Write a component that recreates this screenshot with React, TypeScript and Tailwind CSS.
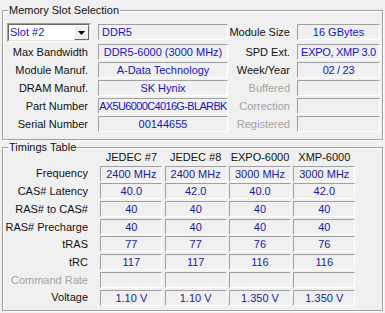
import type { ReactNode } from "react"

const box =
  "h-[16px] flex items-center border border-t-[#a0a0a0] border-l-[#a0a0a0] border-b-white border-r-white bg-[#f0f0f0] leading-[14px] whitespace-nowrap"

function Group({ title, className, children }: { title: string; className: string; children: ReactNode }) {
  return (
    <div
      className={
        "relative mx-[2px] border border-[#a0a0a0] shadow-[inset_1px_1px_0_#ffffff,1px_1px_0_#ffffff] " + className
      }
    >
      <span className="absolute left-[5px] top-[-8px] bg-[#f0f0f0] px-px leading-[14px] text-[#111]">
        {title}
      </span>
      {children}
    </div>
  )
}

function Label({ text, off, pr }: { text: string; off?: boolean; pr: string }) {
  return (
    <div className={`flex h-[16px] items-center justify-end whitespace-nowrap ${pr} ${off ? "text-[#a3a3a3]" : "text-[#111]"}`}>
      {text}
    </div>
  )
}

function Value({ text, left, dark, tight }: { text?: string; left?: boolean; dark?: boolean; tight?: boolean }) {
  return (
    <div
      className={`${box} ${left ? "justify-start pl-[3px]" : "justify-center"} ${dark ? "text-[#1a1a9c]" : "text-[#1414c4]"} ${tight ? "tracking-[-0.3px]" : ""}`}
    >
      {text}
    </div>
  )
}

function SlotSelect() {
  return (
    <div className="-mt-[1px] flex h-[19px] w-[84px] border border-t-[#a0a0a0] border-l-[#a0a0a0] border-b-white border-r-white">
      <div className="flex flex-1 border border-t-[#696969] border-l-[#696969] border-b-[#e3e3e3] border-r-[#e3e3e3] bg-white">
        <span className="flex-1 pl-[1px] leading-[15px] text-[#1414c4]">Slot #2</span>
        <div className="flex w-[15px] items-center justify-center border border-t-white border-l-white border-b-[#696969] border-r-[#696969] bg-[#f0f0f0]">
          <svg width="7" height="4" viewBox="0 0 7 4">
            <path d="M0 0h7L3.5 4z" fill="#000" />
          </svg>
        </div>
      </div>
    </div>
  )
}

const topRows = [
  { l: "Max Bandwidth", v: "DDR5-6000 (3000 MHz)", r: "SPD Ext.", rv: "EXPO, XMP 3.0" },
  { l: "Module Manuf.", v: "A-Data Technology", r: "Week/Year", rv: "02 / 23" },
  { l: "DRAM Manuf.", v: "SK Hynix", r: "Buffered", rv: "", off: true },
  { l: "Part Number", v: "AX5U6000C4016G-BLARBK", r: "Correction", rv: "", off: true, part: true },
  { l: "Serial Number", v: "00144655", r: "Registered", rv: "", off: true },
]

const timings: { l: string; v: string[]; off?: boolean }[] = [
  { l: "Frequency", v: ["2400 MHz", "2400 MHz", "3000 MHz", "3000 MHz"] },
  { l: "CAS# Latency", v: ["40.0", "42.0", "40.0", "42.0"] },
  { l: "RAS# to CAS#", v: ["40", "40", "40", "40"] },
  { l: "RAS# Precharge", v: ["40", "40", "40", "40"] },
  { l: "tRAS", v: ["77", "77", "76", "76"] },
  { l: "tRC", v: ["117", "117", "116", "116"] },
  { l: "Command Rate", v: ["", "", "", ""], off: true },
  { l: "Voltage", v: ["1.10 V", "1.10 V", "1.350 V", "1.350 V"] },
]

export default function App() {
  return (
    <div
      className="h-[313px] w-[385px] overflow-hidden bg-[#f0f0f0] pt-[10px] text-[11px]"
      style={{ fontFamily: '"Liberation Sans", Arial, sans-serif' }}
    >
      <Group title="Memory Slot Selection" className="pl-[4px] pt-[13px] pb-[7px]">
        <div className="grid grid-cols-[91px_130px_69px_83px] gap-y-[2px]">
          <SlotSelect />
          <Value text="DDR5" left />
          <Label text="Module Size" pr="pr-[7px]" />
          <Value text="16 GBytes" />
          {topRows.map((r) => (
            <div key={r.l} className="contents">
              <Label text={r.l} pr="pr-[10px]" />
              {r.part ? (
                <div className={`${box} justify-center overflow-visible text-[#1414c4]`}>
                  <span className="bg-[#f0f0f0] tracking-[-0.65px]">{r.v}</span>
                </div>
              ) : (
                <Value text={r.v} />
              )}
              <Label text={r.r} off={r.off} pr="pr-[7px]" />
              <Value text={r.rv} tight />
            </div>
          ))}
        </div>
      </Group>

      <Group title="Timings Table" className="mt-[7px] pl-[4px] pt-[2px] pb-[4px]">
        <div className="grid grid-cols-[91px_62px_62px_62px_62px] gap-x-[2.33px] gap-y-[1.7px]">
          <div className="h-[14px]" />
          {["JEDEC #7", "JEDEC #8", "EXPO-6000", "XMP-6000"].map((h) => (
            <div key={h} className="flex h-[14px] items-center justify-center text-[#111]">
              {h}
            </div>
          ))}
          {timings.map((t) => (
            <div key={t.l} className="contents">
              <Label text={t.l} off={t.off} pr="pr-[10px]" />
              {t.v.map((v, i) => (
                <Value key={i} text={v} dark />
              ))}
            </div>
          ))}
        </div>
      </Group>
    </div>
  )
}
